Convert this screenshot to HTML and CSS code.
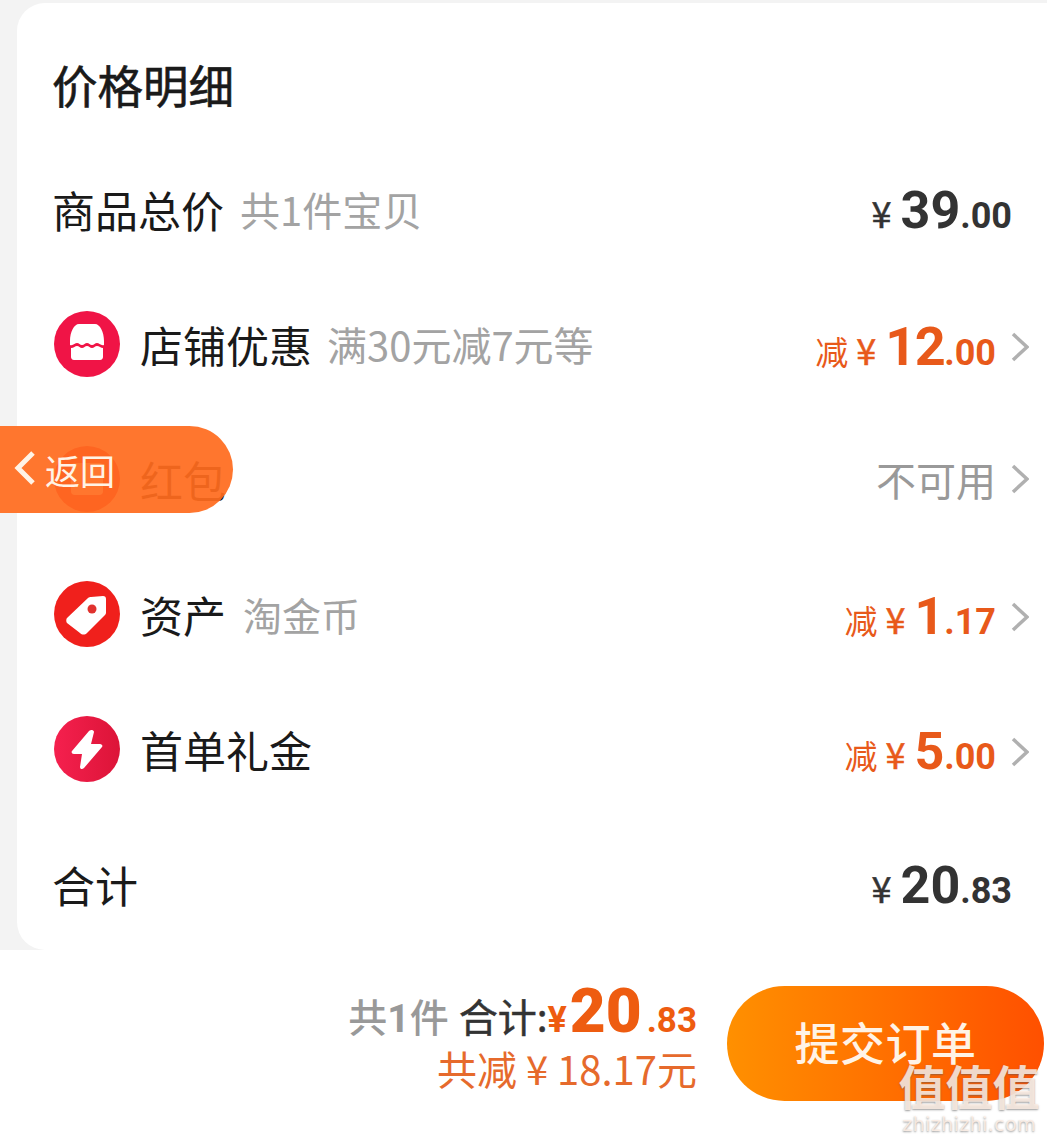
FILE: index.html
```html
<!DOCTYPE html>
<html lang="zh-CN">
<head>
    <meta charset="UTF-8">
    <meta name="viewport" content="width=device-width, initial-scale=1.0">
    <title>价格明细</title>
    <link rel="stylesheet" href="styles.css">
</head>
<body>
    <div class="card">
        <h1>价格明细</h1>
        <div class="row">
            <div class="label">商品总价<span class="sub first">共1件宝贝</span></div>
            <div class="price"><span class="yen">¥</span><b>39</b><span class="cents">.00</span></div>
        </div>
        <div class="row">
            <div class="label">
                <svg class="icon" viewBox="0 0 66 66">
                    <circle cx="33" cy="33" r="33" fill="#f01446"/>
                    <path d="M25 13h16c5 0 9 8 9 17v4c-3 1-5-2-7-2s-3 2-5 2-3-2-5-2-3 2-5 2-3-2-5-2-4 3-7 2v-4c0-9 4-17 9-17z" fill="#fff"/>
                    <path d="M17 37c3 0 4-2 6-2s3 2 5 2 3-2 5-2 3 2 5 2 3-2 5-2 4 2 6 2v9c0 1-1 3-3 3H20c-2 0-3-2-3-3z" fill="#fff"/>
                </svg>
                店铺优惠<span class="sub">满30元减7元等</span>
            </div>
            <div class="price off"><span class="minus">减</span><span class="yen">¥</span><b class="big">12</b><span class="cents">.00</span><svg class="arrow" viewBox="0 0 18 30"><path d="M2 2l14 13L2 28"/></svg></div>
        </div>
        <div class="row">
            <div class="label">
                <svg class="icon" viewBox="0 0 66 66">
                    <circle cx="33" cy="33" r="33" fill="#f01446"/>
                    <rect x="17" y="17" width="32" height="32" rx="4" fill="#fff"/>
                </svg>
                红包
            </div>
            <div class="price none">不可用<svg class="arrow" viewBox="0 0 18 30"><path d="M2 2l14 13L2 28"/></svg></div>
        </div>
        <div class="row">
            <div class="label">
                <svg class="icon" viewBox="0 0 66 66">
                    <circle cx="33" cy="33" r="33" fill="#f0201c"/>
                    <path d="M13 37l21-20c1-1 2-1 3-1l12-1c2 0 3 1 3 3l0 13c0 1 0 2-1 3L33 52c-2 2-5 2-7 0L13 42c-1-1-1-4 0-5z" fill="#fff"/>
                    <circle cx="38" cy="28" r="4.5" fill="#e0322e"/>
                </svg>
                资产<span class="sub asset">淘金币</span>
            </div>
            <div class="price off"><span class="minus">减</span><span class="yen">¥</span><b>1</b><span class="cents">.17</span><svg class="arrow" viewBox="0 0 18 30"><path d="M2 2l14 13L2 28"/></svg></div>
        </div>
        <div class="row">
            <div class="label">
                <svg class="icon" viewBox="0 0 66 66">
                    <defs>
                        <linearGradient id="bolt" x1="0" y1="0" x2="1" y2="0">
                            <stop offset="0" stop-color="#f5204e"/>
                            <stop offset="1" stop-color="#dc1438"/>
                        </linearGradient>
                    </defs>
                    <circle cx="33" cy="33" r="33" fill="url(#bolt)"/>
                    <path d="M38 14c1 0 2 1 2 2l-3 12h9c2 0 3 2 2 3L30 52c-2 2-4 1-4-1l2-13h-8c-2 0-3-2-2-3L35 15c1-1 2-1 3-1z" fill="#fff"/>
                </svg>
                首单礼金
            </div>
            <div class="price off"><span class="minus">减</span><span class="yen">¥</span><b>5</b><span class="cents">.00</span><svg class="arrow" viewBox="0 0 18 30"><path d="M2 2l14 13L2 28"/></svg></div>
        </div>
        <div class="row">
            <div class="label">合计</div>
            <div class="price"><span class="yen">¥</span><b>20</b><span class="cents">.83</span></div>
        </div>
    </div>

    <div class="footer">
        <div class="summary">
            <div class="total">
                <span class="count">共<b>1</b>件</span>
                <span class="sum">合计:</span><span class="sum-price"><span class="yen">¥</span><b>20</b><span class="cents">.83</span></span>
            </div>
            <div class="saved">共减 ¥ 18.17元</div>
        </div>
        <button class="submit">提交订单</button>
    </div>

    <!-- floating back pill, sits over the red packet row -->
    <div class="back">
        <svg viewBox="0 0 24 36"><path d="M20 3L5 18l15 15"/></svg>
        返回
    </div>

    <div class="mark">
        <div class="mark-big">值值值</div>
        <div class="mark-url">zhizhizhi.com</div>
    </div>
</body>
</html>
```

FILE: styles.css
```css
* {
    box-sizing: border-box;
}
body {
    margin: 0;
    width: 1047px;
    height: 1142px;
    overflow: hidden;
    position: relative;
    background: #f3f3f3;
    font-family: "Noto Sans CJK SC", "Noto Sans", sans-serif;
    color: #1a1a1a;
}
.card {
    margin: 3px 0 0 17px;
    height: 947px;
    padding: 0 35px;
    background: #fff;
    border-radius: 28px 0 0 28px;
}
h1 {
    margin: 0;
    height: 141px;
    padding-top: 48px;
    font-size: 45.5px;
    line-height: 66px;
    font-weight: 400;
    -webkit-text-stroke: 0.6px #1a1a1a;
}
.row {
    display: flex;
    align-items: center;
    justify-content: space-between;
    height: 134.8px;
}
.row:first-of-type {
    height: 133px;
    padding-bottom: 3px;
}
.label {
    display: flex;
    align-items: center;
    font-size: 43px;
    line-height: 60px;
}
.icon {
    width: 66px;
    height: 66px;
    margin: 0 20px 0 2px;
    flex: none;
}
.sub {
    margin-left: 15px;
    font-size: 40px;
    color: #a3a3a3;
}
.sub.first {
    margin-left: 16px;
}
.sub.asset {
    margin-left: 17px;
    font-size: 39px;
}
.price {
    display: flex;
    align-items: baseline;
    padding-top: 4px;
    font-family: Roboto, "Noto Sans CJK SC", sans-serif;
    color: #333;
}
.price .yen {
    margin-right: 9px;
    font-family: "Noto Sans CJK SC", sans-serif;
    font-size: 36px;
    font-weight: 400;
    -webkit-text-stroke: 0.5px currentColor;
}
.price b {
    font-size: 52px;
    line-height: 60px;
    font-weight: 700;
}
.price .cents {
    font-size: 36px;
    font-weight: 700;
}
.price.off {
    margin-right: -17px;
    padding-top: 6px;
    color: #e8591a;
}
.price.off .minus {
    margin-right: 8px;
    font-size: 33px;
    font-family: "Noto Sans CJK SC", sans-serif;
}
.price.off b.big {
    font-size: 54px;
    letter-spacing: -1.5px;
}
.price.none {
    margin-right: -17px;
    padding-top: 0;
    font-family: "Noto Sans CJK SC", sans-serif;
    font-size: 40px;
    color: #999;
}
.arrow {
    width: 18px;
    height: 30px;
    margin-left: 15px;
    align-self: center;
    fill: none;
    stroke: #b0b0b0;
    stroke-width: 3.5;
}
.footer {
    display: flex;
    justify-content: flex-end;
    height: 192px;
    padding: 36px 3px 0 0;
    background: #fff;
}
.summary {
    margin-right: 30px;
    text-align: right;
}
.total {
    display: flex;
    align-items: baseline;
    justify-content: flex-end;
    height: 60px;
    margin-top: -6px;
    font-size: 39px;
    color: #333;
}
.count {
    margin-right: 10px;
    color: #999;
    font-weight: 500;
}
.count b {
    font-family: Roboto, sans-serif;
}
.sum {
    font-weight: 400;
    -webkit-text-stroke: 0.5px #333;
}
.sum-price {
    color: #ee5c10;
    font-family: Roboto, sans-serif;
    font-weight: 700;
}
.sum-price .yen {
    font-size: 36px;
}
.sum-price b {
    margin: 0 5px 0 3px;
    font-size: 62px;
    line-height: 62px;
}
.sum-price .cents {
    font-size: 35px;
}
.saved {
    font-size: 40px;
    line-height: 56px;
    color: #e66a2c;
    white-space: nowrap;
}
.submit {
    width: 317px;
    height: 115px;
    padding-bottom: 6px;
    border: 0;
    border-radius: 58px;
    background: linear-gradient(90deg, #ff9000, #ff5000);
    color: #fff3e6;
    font-family: inherit;
    font-size: 45px;
    font-weight: 500;
    letter-spacing: 0.5px;
}
.back {
    position: absolute;
    left: 0;
    top: 426px;
    display: flex;
    align-items: center;
    width: 233px;
    height: 87px;
    padding-left: 13px;
    border-radius: 0 44px 44px 0;
    background: rgba(255, 108, 30, 0.93);
    color: #fff3e6;
    font-size: 35px;
}
.back svg {
    width: 24px;
    height: 36px;
    margin: -4px 8px 0 0;
    fill: none;
    stroke: #fff3e6;
    stroke-width: 5;
}
.mark {
    position: absolute;
    right: 6px;
    bottom: 6px;
    width: 144px;
    text-align: center;
    color: rgba(255, 240, 230, 0.85);
    text-shadow: 0 1px 2px rgba(90, 90, 90, 0.6);
}
.mark-big {
    font-size: 47px;
    line-height: 54px;
    font-weight: 700;
}
.mark-url {
    font-family: "DejaVu Sans", sans-serif;
    font-size: 19px;
    line-height: 24px;
    letter-spacing: 0.4px;
}
```
